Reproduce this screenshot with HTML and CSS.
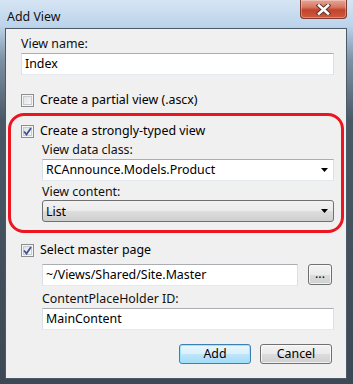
FILE: index.html
```html
<!DOCTYPE html>
<html lang="en">
<head>
    <meta charset="UTF-8">
    <title>Add View</title>
    <link rel="stylesheet" href="styles.css">
</head>
<body>

<div id="window">
    <div id="titlebar">
        <span class="title">Add View</span>
        <div id="close-button">
            <svg width="17" height="11" viewBox="0 0 17 11">
                <path d="M4 1.5 L13 9.5 M13 1.5 L4 9.5" stroke="#5a3028" stroke-width="4.4" stroke-linecap="square" fill="none"/>
                <path d="M4 1.5 L13 9.5 M13 1.5 L4 9.5" stroke="#fff" stroke-width="2.6" stroke-linecap="square" fill="none"/>
            </svg>
        </div>
    </div>

    <div id="client">
        <div class="label first">View name:</div>
        <div class="textbox">Index</div>

        <div class="check-row partial">
            <span class="checkbox"></span>
            <span>Create a partial view (.ascx)</span>
        </div>

        <div id="typed-group">
            <div class="check-row">
                <span class="checkbox checked">
                    <svg width="9" height="9" viewBox="0 0 9 9"><path d="M1 4.5 L3.5 7.5 L8 1" stroke="#3f5390" stroke-width="1.8" fill="none"/></svg>
                </span>
                <span>Create a strongly-typed view</span>
            </div>
            <div class="indent">
                <div class="label">View data class:</div>
                <div class="textbox combo">
                    <span>RCAnnounce.Models.Product</span>
                    <svg width="7" height="4" viewBox="0 0 7 4"><path d="M0 0 H7 L3.5 4 Z" fill="#000"/></svg>
                </div>
                <div class="label">View content:</div>
                <div class="dropdown">
                    <span>List</span>
                    <svg width="7" height="4" viewBox="0 0 7 4"><path d="M0 0 H7 L3.5 4 Z" fill="#000"/></svg>
                </div>
            </div>
        </div>

        <div class="check-row master">
            <span class="checkbox checked">
                <svg width="9" height="9" viewBox="0 0 9 9"><path d="M1 4.5 L3.5 7.5 L8 1" stroke="#3f5390" stroke-width="1.8" fill="none"/></svg>
            </span>
            <span>Select master page</span>
        </div>
        <div class="indent">
            <div class="master-line">
                <div class="textbox">~/Views/Shared/Site.Master</div>
                <div class="button browse">...</div>
            </div>
            <div class="label">ContentPlaceHolder ID:</div>
            <div class="textbox">MainContent</div>
        </div>

        <div class="actions">
            <div class="button default">Add</div>
            <div class="button">Cancel</div>
        </div>
    </div>
</div>

</body>
</html>
```

FILE: styles.css
```css
body {
    margin: 0;
    width: 353px;
    height: 384px;
    overflow: hidden;
    font-family: 'Noto Sans', sans-serif;
    font-size: 12.4px;
    color: #000;
}

#window {
    height: 384px;
    box-sizing: border-box;
    padding: 0 6px 0 5px;
    background: linear-gradient(#d6e5f4 0, #bcd3ea 26px, #7d91a4 60px, #4a5866 120px, #3c4853 100%);
}

#titlebar {
    height: 28px;
    display: flex;
    justify-content: space-between;
    align-items: flex-start;
}

#titlebar .title {
    margin: 9px 0 0 2px;
    line-height: 15px;
    color: #111;
}

#close-button {
    width: 47px;
    height: 19px;
    box-sizing: border-box;
    border: 1px solid #7d3a2e;
    border-top: none;
    border-radius: 0 0 4px 4px;
    background: linear-gradient(#e7a594 0, #d67763 40%, #c2432b 55%, #cf5a3f 100%);
    box-shadow: inset 0 0 0 1px rgba(255, 255, 255, 0.3);
    display: flex;
    align-items: center;
    justify-content: center;
}

#client {
    height: 351px;
    box-sizing: border-box;
    border: 1px solid #4b5a68;
    background: #f0f0f0;
    padding: 7px 12px 0 15px;
}

.label {
    line-height: 16px;
    margin-top: 3px;
    color: #111;
}

.label.first {
    margin-top: 0;
}

.textbox {
    height: 22px;
    box-sizing: border-box;
    margin-top: 1px;
    padding: 0 3px 0 3px;
    line-height: 20px;
    background: #fff;
    border: 1px solid #dbdfe6;
    border-top-color: #abadb3;
    border-bottom-color: #e3e9ef;
}

.combo {
    display: flex;
    align-items: center;
    justify-content: space-between;
    padding-right: 5px;
}

.dropdown {
    height: 22px;
    box-sizing: border-box;
    padding: 0 5px 0 3px;
    border: 1px solid #707070;
    border-radius: 3px;
    background: linear-gradient(#f2f2f2 0, #ebebeb 50%, #dddddd 51%, #cfcfcf 100%);
    display: flex;
    align-items: center;
    justify-content: space-between;
}

.check-row {
    display: flex;
    align-items: center;
    gap: 6px;
    line-height: 16px;
}

.check-row.partial {
    margin-top: 17px;
}

.check-row.master {
    margin-top: 9px;
}

.checkbox {
    width: 13px;
    height: 13px;
    box-sizing: border-box;
    border: 1px solid #8e8f8f;
    background: linear-gradient(135deg, #dcdcdc, #fdfdfd);
    box-shadow: inset 0 0 0 1px #f4f4f4, inset 0 0 0 2px #c8ccd2;
    display: flex;
    align-items: center;
    justify-content: center;
}

#typed-group {
    margin: 5px -10px 0 -13px;
    padding: 7px 7px 8px 10px;
    border: 3px solid #ec1520;
    border-radius: 16px;
}

.indent {
    padding-left: 21px;
}

.master-line {
    display: flex;
    align-items: flex-start;
    gap: 10px;
    margin-top: 6px;
    margin-right: 2px;
}

.master-line .textbox {
    flex: 1;
    margin-top: 0;
}

.master-line + .label {
    margin-top: 5px;
}

.button {
    width: 72px;
    height: 20px;
    box-sizing: border-box;
    border: 1px solid #707070;
    border-radius: 3px;
    background: linear-gradient(#f2f2f2 0, #ebebeb 50%, #dddddd 51%, #cfcfcf 100%);
    box-shadow: inset 0 0 0 1px rgba(255, 255, 255, 0.7);
    text-align: center;
    line-height: 18px;
}

.button.browse {
    width: 24px;
    height: 21px;
    line-height: 17px;
}

.button.default {
    border-color: #3c7fb1;
    background: linear-gradient(#eaf6fd 0, #d9f0fc 50%, #bee6fd 51%, #a7d9f5 100%);
    box-shadow: inset 0 0 0 1px #9ee4fb;
}

.actions {
    display: flex;
    justify-content: flex-end;
    gap: 9px;
    margin: 14px 2px 0 0;
}
```
